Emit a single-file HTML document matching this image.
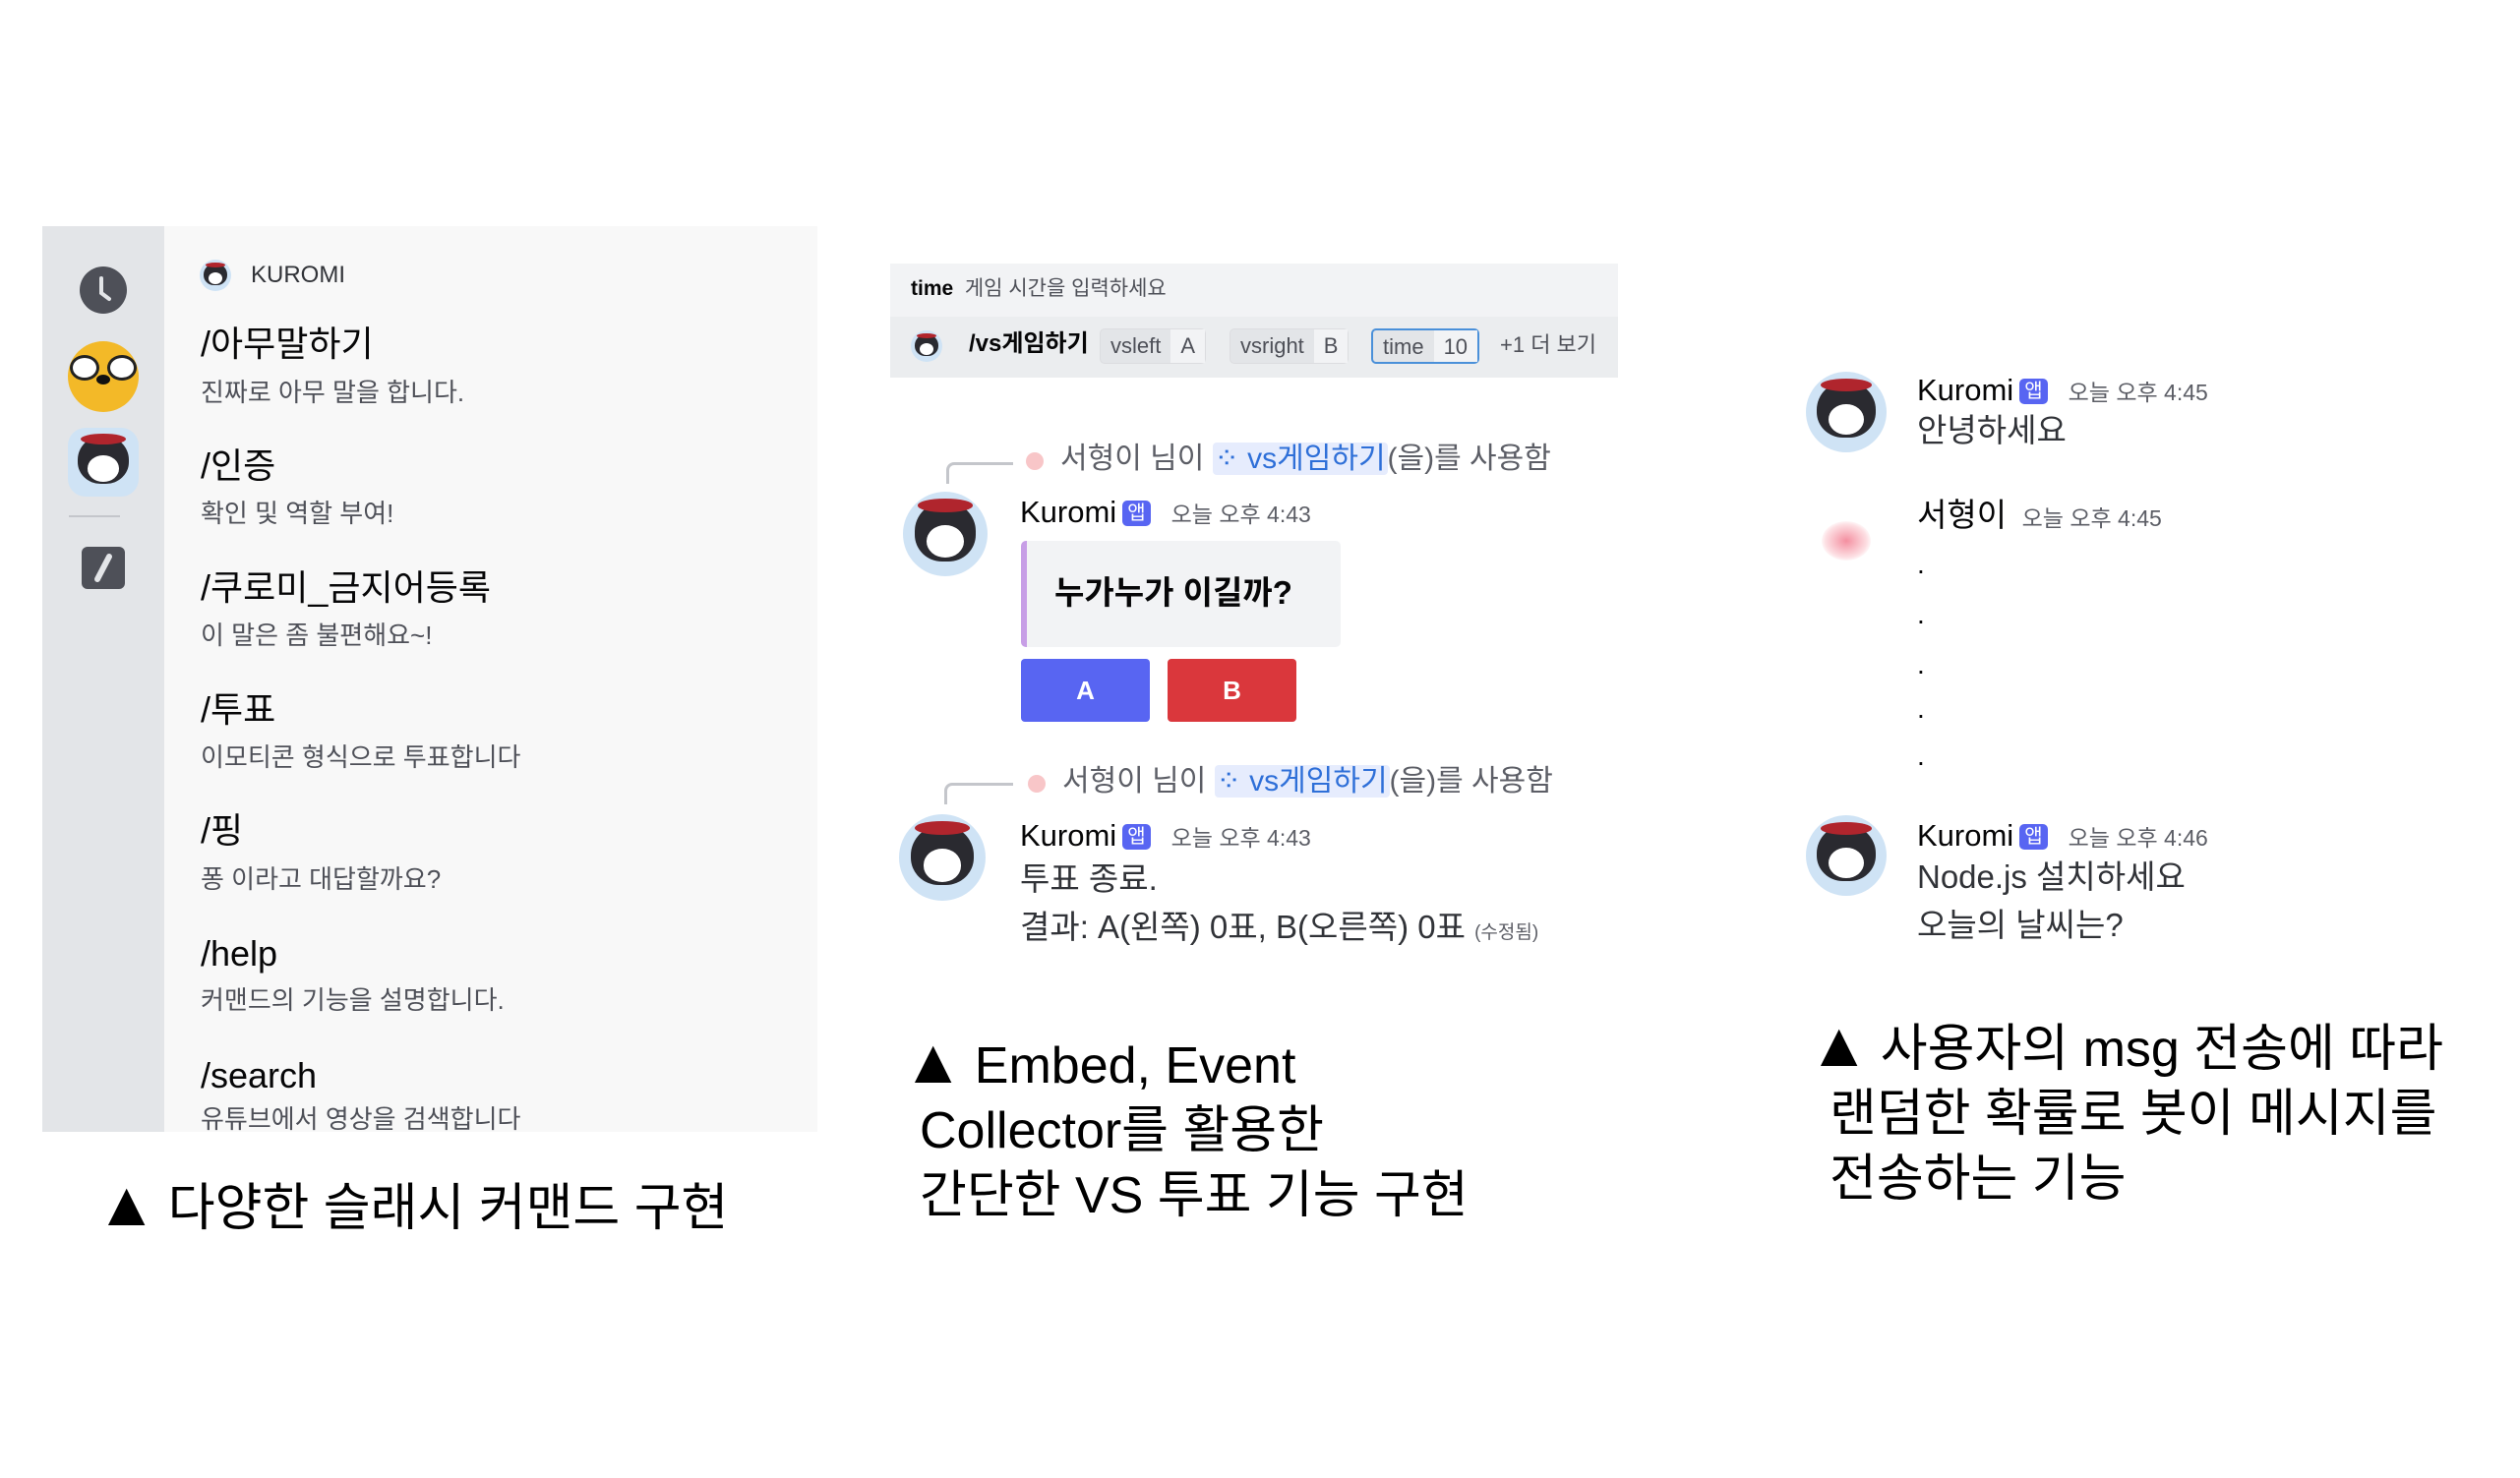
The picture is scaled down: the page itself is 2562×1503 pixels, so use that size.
<!DOCTYPE html>
<html><head><meta charset="utf-8"><style>
*{margin:0;padding:0;box-sizing:border-box}
body{width:2562px;height:1503px;background:#fff;position:relative;overflow:hidden;font-family:"Liberation Sans","Noto Sans CJK KR",sans-serif;color:#060607}
.a{position:absolute;white-space:nowrap;line-height:1}
.kav{position:absolute;border-radius:50%;overflow:hidden;background:#cfe3f5}
.kav .h{position:absolute;left:14%;top:12%;width:72%;height:70%;border-radius:50% 50% 45% 45%;background:#2a2a30}
.kav .f{position:absolute;left:28%;top:40%;width:44%;height:38%;border-radius:50%;background:#fff}
.kav .r{position:absolute;left:18%;top:8%;width:64%;height:16%;border-radius:50%;background:#b0252d}
.tag{display:inline-block;background:#5865f2;color:#fff;border-radius:5px;font-size:20px;padding:3px 5px;vertical-align:3px;margin:0 6px}
.tm{color:#5c5e66;font-size:23px}
.cmd{position:absolute;left:204px;font-size:36px;color:#060607;line-height:1}
.desc{position:absolute;left:204px;font-size:26px;color:#4e5058;line-height:1}
.cap{position:absolute;font-size:52px;color:#000;line-height:66px;white-space:nowrap}
.tri{font-size:64px;line-height:50px;margin-right:-4px}
.chip{position:absolute;top:334px;height:36px;border:1px solid #dcdde0;border-radius:5px;background:#e3e5e8;font-size:22px;color:#4e5058;line-height:34px;white-space:nowrap;display:flex}
.chip span{display:block;padding:0 10px}
.chip span+span{background:#f2f3f5}
</style></head><body>

<!-- Panel 1 -->
<div style="position:absolute;left:43px;top:230px;width:788px;height:921px;background:#f8f8f8;overflow:hidden">
 <div style="position:absolute;left:0;top:0;width:124px;height:921px;background:#e3e5e8"></div>
</div>
<div style="position:absolute;left:81px;top:271px;width:48px;height:48px;border-radius:50%;background:#4e5058"></div>
<svg class="a" style="left:81px;top:271px" width="48" height="48"><path d="M22 12 V27 L30 33" stroke="#e3e5e8" stroke-width="4" fill="none" stroke-linecap="round"/></svg>
<div style="position:absolute;left:69px;top:347px;width:72px;height:72px;border-radius:50%;background:#f3b928;overflow:hidden">
 <div style="position:absolute;left:2px;top:14px;width:30px;height:26px;border-radius:50%;background:#fff;border:3px solid #222"></div>
 <div style="position:absolute;left:40px;top:14px;width:30px;height:26px;border-radius:50%;background:#fff;border:3px solid #222"></div>
 <div style="position:absolute;left:29px;top:34px;width:14px;height:10px;border-radius:50%;background:#111"></div>
</div>
<div class="kav" style="left:69px;top:435px;width:72px;height:70px;border-radius:18px"><div class="h"></div><div class="r"></div><div class="f"></div></div>
<div style="position:absolute;left:70px;top:524px;width:52px;height:2px;background:#c4c6cb"></div>
<div style="position:absolute;left:83px;top:556px;width:44px;height:43px;border-radius:6px;background:#4e5058"></div>
<svg class="a" style="left:83px;top:556px" width="44" height="43"><path d="M28 10 L16 33" stroke="#e3e5e8" stroke-width="6" stroke-linecap="round"/></svg>

<div class="kav" style="left:203px;top:264px;width:32px;height:32px"><div class="h"></div><div class="r"></div><div class="f"></div></div>
<div class="a" style="left:255px;top:268px;font-size:24px;color:#313338">KUROMI</div>
<div class="cmd" style="top:332px">/아무말하기</div><div class="desc" style="top:386px">진짜로 아무 말을 합니다.</div>
<div class="cmd" style="top:456px">/인증</div><div class="desc" style="top:509px">확인 및 역할 부여!</div>
<div class="cmd" style="top:580px">/쿠로미_금지어등록</div><div class="desc" style="top:633px">이 말은 좀 불편해요~!</div>
<div class="cmd" style="top:704px">/투표</div><div class="desc" style="top:757px">이모티콘 형식으로 투표합니다</div>
<div class="cmd" style="top:827px">/핑</div><div class="desc" style="top:881px">퐁 이라고 대답할까요?</div>
<div class="cmd" style="top:952px">/help</div><div class="desc" style="top:1004px">커맨드의 기능을 설명합니다.</div>
<div class="cmd" style="top:1076px">/search</div>
<div style="position:absolute;left:204px;top:1125px;height:26px;overflow:hidden"><div class="desc" style="position:static">유튜브에서 영상을 검색합니다</div></div>
<div class="cap" style="left:97px;top:1196px"><span class="tri">▲</span> 다양한 슬래시 커맨드 구현</div>

<!-- Panel 2 -->
<div style="position:absolute;left:905px;top:268px;width:740px;height:116px;background:#f2f3f5"></div>
<div style="position:absolute;left:905px;top:322px;width:740px;height:62px;background:#ebedef"></div>
<div class="a" style="left:926px;top:283px;font-size:21px"><b>time</b> <span style="color:#4e5058">&nbsp;게임 시간을 입력하세요</span></div>
<div class="kav" style="left:926px;top:336px;width:32px;height:32px"><div class="h"></div><div class="r"></div><div class="f"></div></div>
<div class="a" style="left:985px;top:338px;font-size:24px;font-weight:bold">/vs게임하기</div>
<div class="chip" style="left:1118px"><span>vsleft</span><span>A</span></div>
<div class="chip" style="left:1250px"><span>vsright</span><span>B</span></div>
<div class="chip" style="left:1394px;border:2px solid #4a90d9"><span>time</span><span>10</span></div>
<div class="a" style="left:1525px;top:340px;font-size:22px;color:#4e5058">+1 더 보기</div>

<!-- msg 1 -->
<div style="position:absolute;left:962px;top:470px;width:68px;height:22px;border-left:3px solid #c4c6cb;border-top:3px solid #c4c6cb;border-radius:8px 0 0 0"></div>
<div style="position:absolute;left:1043px;top:460px;width:18px;height:18px;border-radius:50%;background:#f8c6c8"></div>
<div class="a" style="left:1078px;top:452px;font-size:30px;color:#5c5e66">서형이 님이 <span style="background:#e6ecfd;color:#2e6fd8;border-radius:4px;padding:0 2px">⁘ vs게임하기</span>(을)를 사용함</div>
<div class="kav" style="left:918px;top:500px;width:86px;height:86px"><div class="h"></div><div class="r"></div><div class="f"></div></div>
<div class="a" style="left:1037px;top:505px;font-size:31px">Kuromi<span class="tag">앱</span> <span class="tm">&nbsp;오늘 오후 4:43</span></div>
<div style="position:absolute;left:1038px;top:550px;width:325px;height:108px;background:#f2f3f5;border-left:6px solid #c79ee6;border-radius:5px"></div>
<div class="a" style="left:1072px;top:586px;font-size:33px;font-weight:bold">누가누가 이길까?</div>
<div style="position:absolute;left:1038px;top:670px;width:131px;height:64px;background:#5865f2;border-radius:4px;color:#fff;font-size:26px;font-weight:bold;text-align:center;line-height:64px">A</div>
<div style="position:absolute;left:1187px;top:670px;width:131px;height:64px;background:#da373c;border-radius:4px;color:#fff;font-size:26px;font-weight:bold;text-align:center;line-height:64px">B</div>

<!-- msg 2 -->
<div style="position:absolute;left:960px;top:796px;width:70px;height:22px;border-left:3px solid #c4c6cb;border-top:3px solid #c4c6cb;border-radius:8px 0 0 0"></div>
<div style="position:absolute;left:1045px;top:788px;width:18px;height:18px;border-radius:50%;background:#f8c6c8"></div>
<div class="a" style="left:1080px;top:780px;font-size:30px;color:#5c5e66">서형이 님이 <span style="background:#e6ecfd;color:#2e6fd8;border-radius:4px;padding:0 2px">⁘ vs게임하기</span>(을)를 사용함</div>
<div class="kav" style="left:914px;top:828px;width:88px;height:88px"><div class="h"></div><div class="r"></div><div class="f"></div></div>
<div class="a" style="left:1037px;top:834px;font-size:31px">Kuromi<span class="tag">앱</span> <span class="tm">&nbsp;오늘 오후 4:43</span></div>
<div class="a" style="left:1037px;top:877px;font-size:33px;color:#313338">투표 종료.</div>
<div class="a" style="left:1037px;top:926px;font-size:33px;color:#313338">결과: A(왼쪽) 0표, B(오른쪽) 0표 <span style="font-size:19px;color:#5c5e66">(수정됨)</span></div>
<div class="cap" style="left:935px;top:1051px"><span class="tri" style="margin-left:-18px">▲</span> Embed, Event<br>Collector를 활용한<br>간단한 VS 투표 기능 구현</div>

<!-- Panel 3 -->
<div class="kav" style="left:1836px;top:378px;width:82px;height:82px"><div class="h"></div><div class="r"></div><div class="f"></div></div>
<div class="a" style="left:1949px;top:381px;font-size:31px">Kuromi<span class="tag">앱</span> <span class="tm">&nbsp;오늘 오후 4:45</span></div>
<div class="a" style="left:1949px;top:421px;font-size:33px;color:#313338">안녕하세요</div>
<div style="position:absolute;left:1852px;top:530px;width:50px;height:40px;border-radius:50%;background:radial-gradient(#f48fa0,#fde0e4 60%,#fff 75%)"></div>
<div class="a" style="left:1949px;top:507px;font-size:33px">서형이 <span class="tm">&nbsp;오늘 오후 4:45</span></div>
<div class="a" style="left:1949px;top:560px;font-size:28px">.</div>
<div class="a" style="left:1949px;top:611px;font-size:28px">.</div>
<div class="a" style="left:1949px;top:662px;font-size:28px">.</div>
<div class="a" style="left:1949px;top:707px;font-size:28px">.</div>
<div class="a" style="left:1949px;top:755px;font-size:28px">.</div>
<div class="kav" style="left:1836px;top:829px;width:82px;height:82px"><div class="h"></div><div class="r"></div><div class="f"></div></div>
<div class="a" style="left:1949px;top:834px;font-size:31px">Kuromi<span class="tag">앱</span> <span class="tm">&nbsp;오늘 오후 4:46</span></div>
<div class="a" style="left:1949px;top:875px;font-size:33px;color:#313338">Node.js 설치하세요</div>
<div class="a" style="left:1949px;top:924px;font-size:33px;color:#313338">오늘의 날씨는?</div>
<div class="cap" style="left:1860px;top:1034px"><span class="tri" style="margin-left:-22px">▲</span> 사용자의 msg 전송에 따라<br>랜덤한 확률로 봇이 메시지를<br>전송하는 기능</div>
</body></html>
